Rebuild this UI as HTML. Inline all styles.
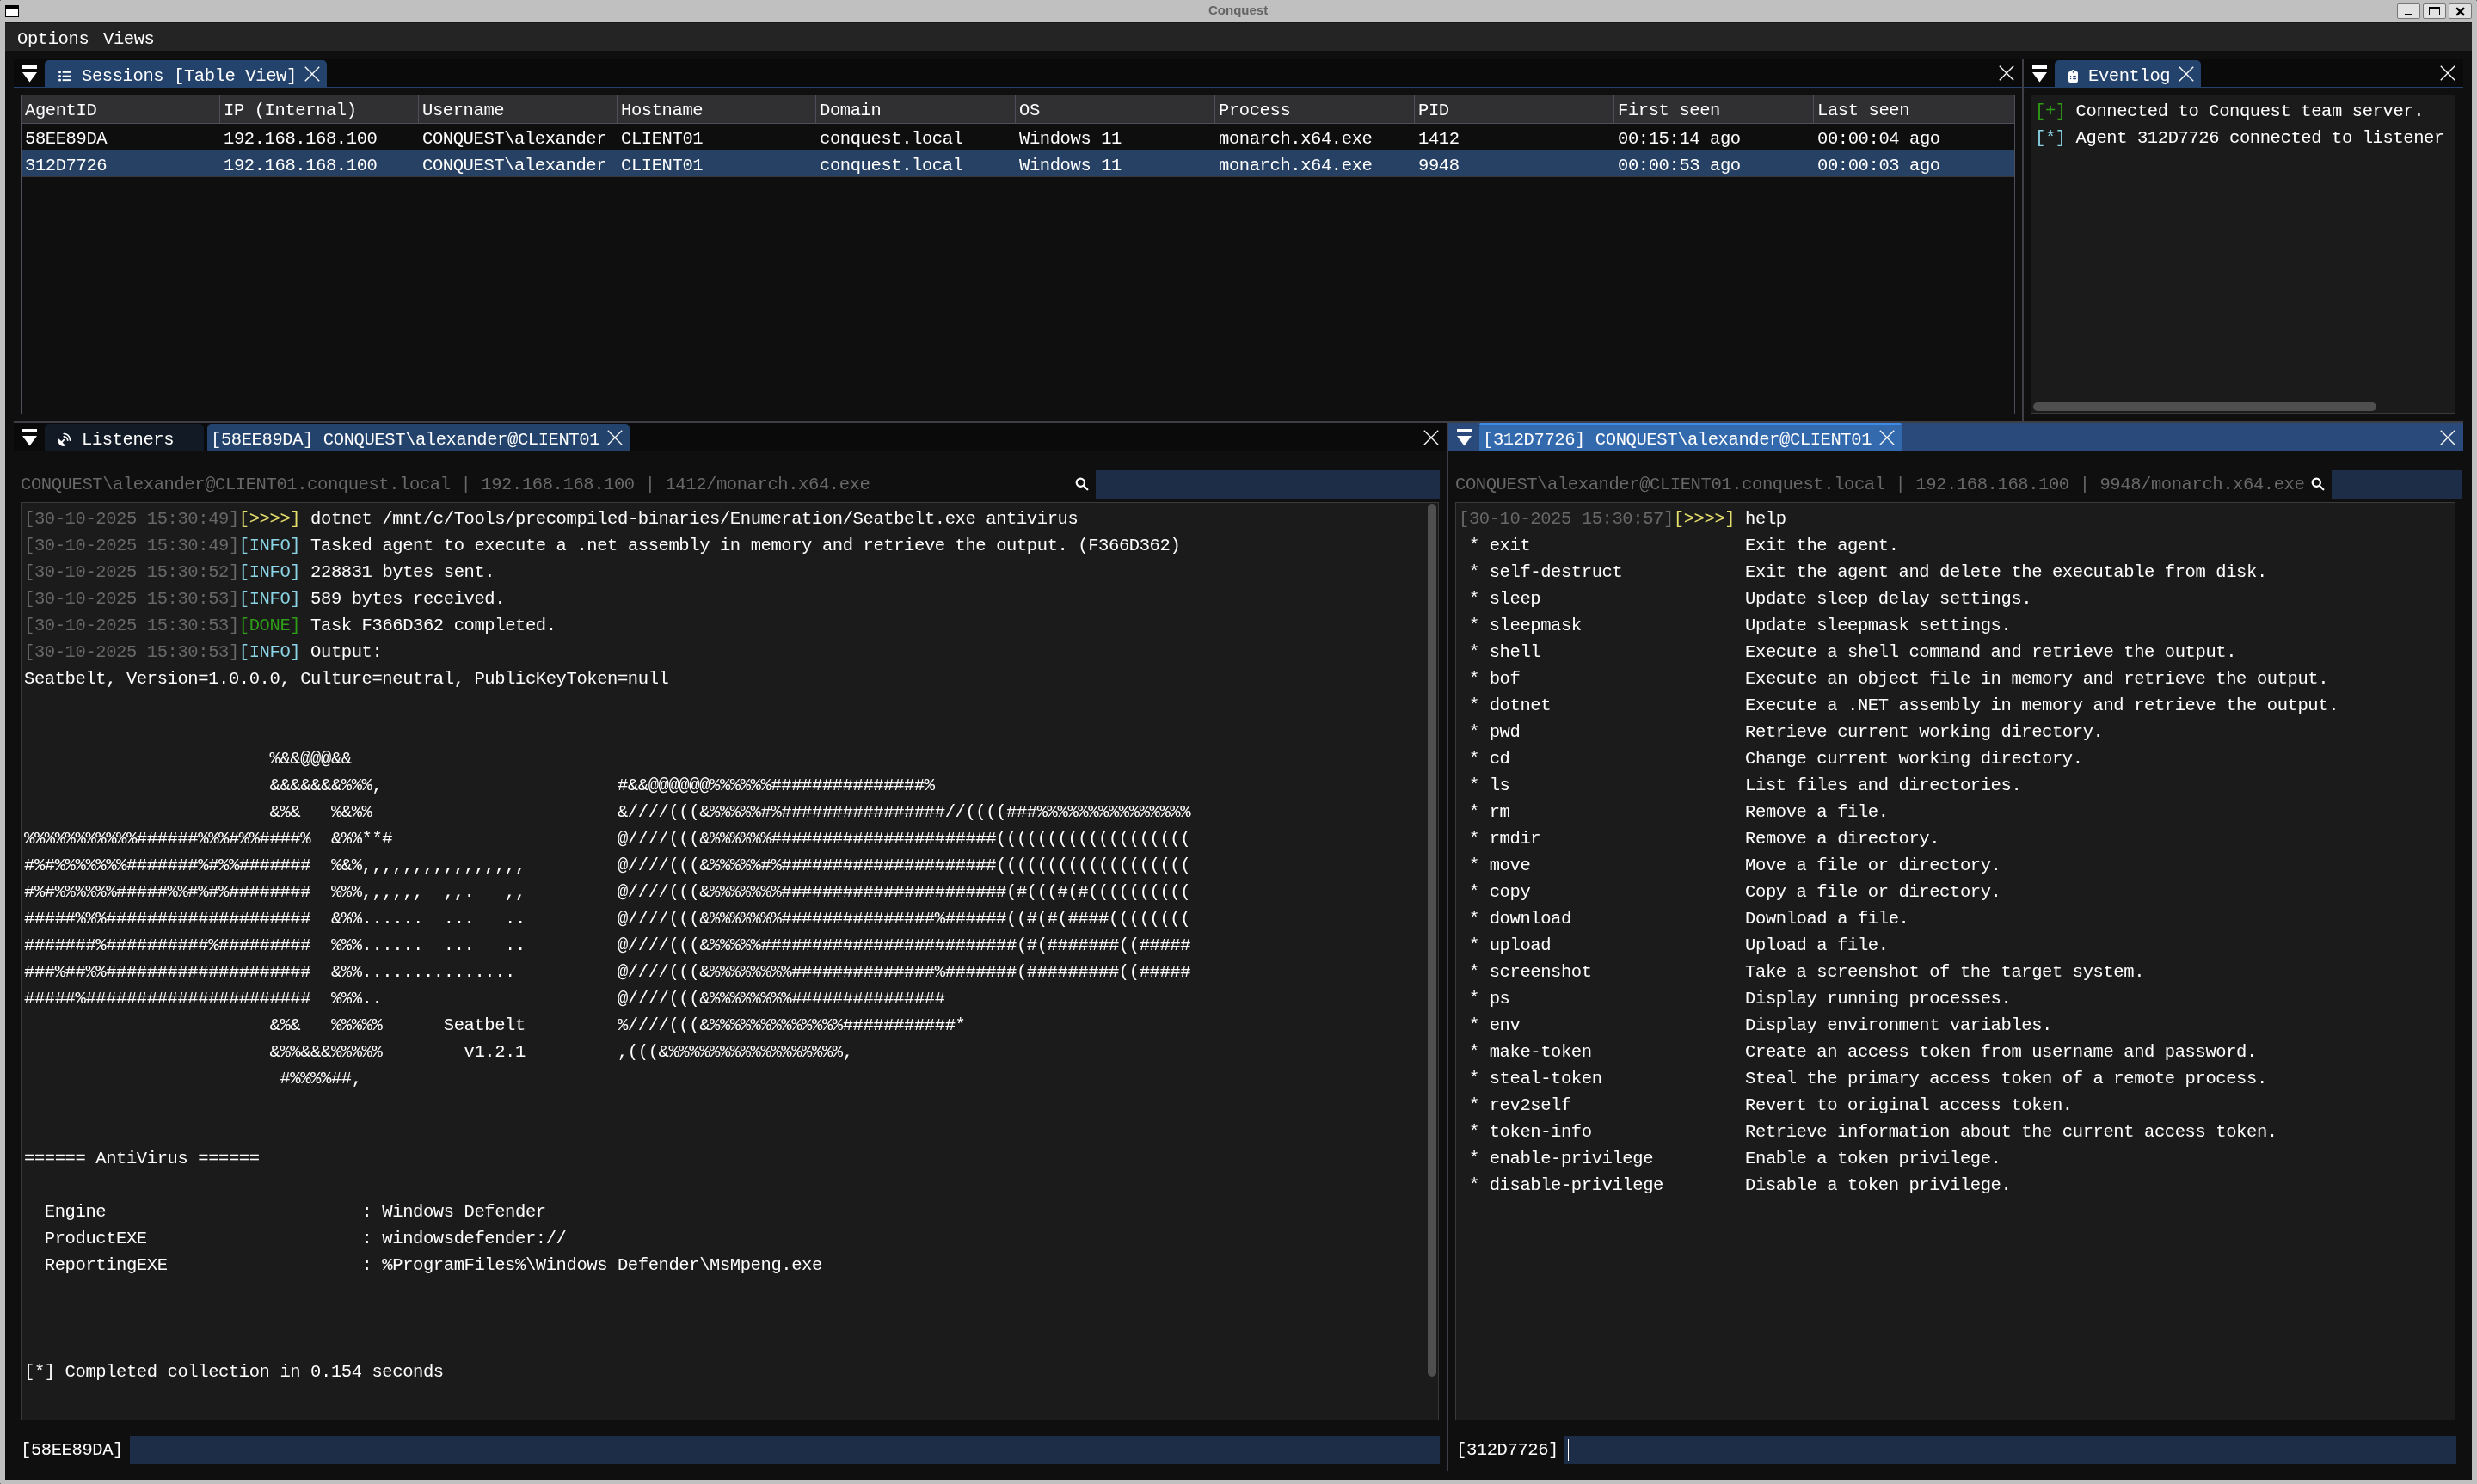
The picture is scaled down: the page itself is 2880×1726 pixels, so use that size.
<!DOCTYPE html><html><head><meta charset="utf-8"><style>
html,body{margin:0;padding:0}
body{width:2880px;height:1726px;background:#c0c0c0;position:relative;overflow:hidden;font-family:"Liberation Mono",monospace}
body div,body svg{position:absolute}
.t{will-change:transform;font-family:"Liberation Mono",monospace;font-size:20.5px;letter-spacing:-0.406px;line-height:31px;white-space:pre}
.g{color:#686868}
.y{color:#e6df6c}
.c{color:#8ad4e6}
.gr{color:#2f9d17}
</style></head><body>

<div style="left:1405px;top:3px;font-family:'Liberation Sans',sans-serif;font-weight:bold;font-size:15px;line-height:18px;color:#646464;white-space:pre;will-change:transform">Conquest</div>
<div style="left:6px;top:6px;width:14px;height:9px;border:1px solid #000;border-top-width:4px;background:#fff"></div>
<div style="left:2787px;top:4px;width:25px;height:16px;background:#e2e2e2;border:1px solid #777;border-radius:2px"></div>
<div style="left:2817px;top:4px;width:25px;height:16px;background:#e2e2e2;border:1px solid #777;border-radius:2px"></div>
<div style="left:2847px;top:4px;width:25px;height:16px;background:#e2e2e2;border:1px solid #777;border-radius:2px"></div>
<div style="left:2796px;top:16px;width:9px;height:2px;background:#000"></div>
<div style="left:2824px;top:8px;width:11px;height:7px;border:1px solid #000;border-top-width:2px"></div>
<svg style="left:2855px;top:8px" width="11" height="11" viewBox="0 0 11 11"><path d="M2 1.8L9.3 9.2M9.3 1.8L2 9.2" stroke="#000" stroke-width="2.4" stroke-linecap="round" fill="none"/></svg>
<div style="left:6px;top:26px;width:2868px;height:1695px;background:#0f0f0f;"></div>
<div style="left:6px;top:26px;width:2868px;height:1px;background:#161616;"></div>
<div style="left:6px;top:27px;width:2868px;height:32px;background:#242424;"></div>
<div class="t" style="left:19.5px;top:30px;color:#fff;">Options</div>
<div class="t" style="left:120px;top:30px;color:#fff;">Views</div>
<div style="left:16px;top:69px;width:2335px;height:32px;background:#0a0a0a;"></div>
<div style="left:16px;top:101px;width:2335px;height:1px;background:#23436c;"></div>
<svg style="left:26px;top:76px" width="17" height="20" viewBox="0 0 17 20"><rect x="0" y="0" width="17" height="4" fill="#fff"/><path d="M0 8H17L8.5 19.5Z" fill="#fff"/></svg>
<div style="left:52px;top:70px;width:328px;height:32px;background:#23436c;border-radius:5px 5px 0 0"></div>
<svg style="left:67px;top:81px" width="17" height="15" viewBox="0 0 17 15"><circle cx="2.5" cy="2.8" r="1.5" fill="#fff"/><circle cx="2.5" cy="7.5" r="1.5" fill="#fff"/><circle cx="2.5" cy="12.1" r="1.5" fill="#fff"/><rect x="5.7" y="1.9" width="10.2" height="1.9" fill="#fff"/><rect x="5.7" y="6.6" width="10.2" height="1.9" fill="#fff"/><rect x="5.7" y="11.2" width="10.2" height="1.9" fill="#fff"/></svg>
<div class="t" style="left:95px;top:73px;color:#fff;">Sessions [Table View]</div>
<svg style="left:354px;top:77px" width="18" height="18" viewBox="0 0 18 18"><path d="M0.8 0.8L17.2 17.2M17.2 0.8L0.8 17.2" stroke="#fff" stroke-width="1.35" fill="none"/></svg>
<svg style="left:2324px;top:76px" width="18" height="18" viewBox="0 0 18 18"><path d="M0.8 0.8L17.2 17.2M17.2 0.8L0.8 17.2" stroke="#fff" stroke-width="1.35" fill="none"/></svg>
<div style="left:24px;top:110px;width:2319px;height:372px;background:#4f4f59;"></div>
<div style="left:25px;top:111px;width:2317px;height:370px;background:#0f0f0f;"></div>
<div style="left:25px;top:111px;width:2317px;height:32px;background:#303033;"></div>
<div style="left:25px;top:143px;width:2317px;height:1px;background:#4f4f59;"></div>
<div style="left:25px;top:144px;width:2317px;height:30px;background:#0e0e0e;"></div>
<div style="left:25px;top:174px;width:2317px;height:31px;background:#264163;"></div>
<div style="left:25px;top:205px;width:2317px;height:1px;background:#36363c;"></div>
<div style="left:255px;top:111px;width:1px;height:32px;background:#4f4f59;"></div>
<div style="left:486px;top:111px;width:1px;height:32px;background:#4f4f59;"></div>
<div style="left:717px;top:111px;width:1px;height:32px;background:#4f4f59;"></div>
<div style="left:948px;top:111px;width:1px;height:32px;background:#4f4f59;"></div>
<div style="left:1180px;top:111px;width:1px;height:32px;background:#4f4f59;"></div>
<div style="left:1412px;top:111px;width:1px;height:32px;background:#4f4f59;"></div>
<div style="left:1644px;top:111px;width:1px;height:32px;background:#4f4f59;"></div>
<div style="left:1876px;top:111px;width:1px;height:32px;background:#4f4f59;"></div>
<div style="left:2108px;top:111px;width:1px;height:32px;background:#4f4f59;"></div>
<div class="t" style="left:29px;top:113px;color:#fff;">AgentID</div>
<div class="t" style="left:29px;top:146px;color:#fff;">58EE89DA</div>
<div class="t" style="left:29px;top:177px;color:#fff;">312D7726</div>
<div class="t" style="left:260px;top:113px;color:#fff;">IP (Internal)</div>
<div class="t" style="left:260px;top:146px;color:#fff;">192.168.168.100</div>
<div class="t" style="left:260px;top:177px;color:#fff;">192.168.168.100</div>
<div class="t" style="left:491px;top:113px;color:#fff;">Username</div>
<div class="t" style="left:491px;top:146px;color:#fff;">CONQUEST\alexander</div>
<div class="t" style="left:491px;top:177px;color:#fff;">CONQUEST\alexander</div>
<div class="t" style="left:722px;top:113px;color:#fff;">Hostname</div>
<div class="t" style="left:722px;top:146px;color:#fff;">CLIENT01</div>
<div class="t" style="left:722px;top:177px;color:#fff;">CLIENT01</div>
<div class="t" style="left:953px;top:113px;color:#fff;">Domain</div>
<div class="t" style="left:953px;top:146px;color:#fff;">conquest.local</div>
<div class="t" style="left:953px;top:177px;color:#fff;">conquest.local</div>
<div class="t" style="left:1185px;top:113px;color:#fff;">OS</div>
<div class="t" style="left:1185px;top:146px;color:#fff;">Windows 11</div>
<div class="t" style="left:1185px;top:177px;color:#fff;">Windows 11</div>
<div class="t" style="left:1417px;top:113px;color:#fff;">Process</div>
<div class="t" style="left:1417px;top:146px;color:#fff;">monarch.x64.exe</div>
<div class="t" style="left:1417px;top:177px;color:#fff;">monarch.x64.exe</div>
<div class="t" style="left:1649px;top:113px;color:#fff;">PID</div>
<div class="t" style="left:1649px;top:146px;color:#fff;">1412</div>
<div class="t" style="left:1649px;top:177px;color:#fff;">9948</div>
<div class="t" style="left:1881px;top:113px;color:#fff;">First seen</div>
<div class="t" style="left:1881px;top:146px;color:#fff;">00:15:14 ago</div>
<div class="t" style="left:1881px;top:177px;color:#fff;">00:00:53 ago</div>
<div class="t" style="left:2113px;top:113px;color:#fff;">Last seen</div>
<div class="t" style="left:2113px;top:146px;color:#fff;">00:00:04 ago</div>
<div class="t" style="left:2113px;top:177px;color:#fff;">00:00:03 ago</div>
<div style="left:2351px;top:69px;width:2px;height:421px;background:#3e3e47;"></div>
<div style="left:2353px;top:69px;width:511px;height:32px;background:#0a0a0a;"></div>
<div style="left:2353px;top:101px;width:511px;height:1px;background:#23436c;"></div>
<svg style="left:2363px;top:76px" width="17" height="20" viewBox="0 0 17 20"><rect x="0" y="0" width="17" height="4" fill="#fff"/><path d="M0 8H17L8.5 19.5Z" fill="#fff"/></svg>
<div style="left:2389px;top:70px;width:170px;height:32px;background:#23436c;border-radius:5px 5px 0 0"></div>
<svg style="left:2404px;top:80px" width="13" height="17" viewBox="0 0 13 17"><path d="M3 3H4.1Q4.4 1 6.5 1Q8.6 1 8.9 3H10Q12 3 12 5V14Q12 16 10 16H3Q1 16 1 14V5Q1 3 3 3Z" fill="#fff"/><circle cx="6.5" cy="3.9" r="0.8" fill="#23436c"/><circle cx="3.6" cy="8.8" r="0.75" fill="#23436c"/><rect x="6.1" y="8.1" width="3.9" height="1.4" rx="0.7" fill="#23436c"/><circle cx="3.6" cy="11.5" r="0.75" fill="#23436c"/><rect x="6.1" y="10.8" width="3.9" height="1.4" rx="0.7" fill="#23436c"/></svg>
<div class="t" style="left:2428px;top:73px;color:#fff;">Eventlog</div>
<svg style="left:2533px;top:77px" width="18" height="18" viewBox="0 0 18 18"><path d="M0.8 0.8L17.2 17.2M17.2 0.8L0.8 17.2" stroke="#fff" stroke-width="1.35" fill="none"/></svg>
<svg style="left:2837px;top:76px" width="18" height="18" viewBox="0 0 18 18"><path d="M0.8 0.8L17.2 17.2M17.2 0.8L0.8 17.2" stroke="#fff" stroke-width="1.35" fill="none"/></svg>
<div style="left:2361px;top:110px;width:494px;height:371px;background:#3a3a3a;"></div>
<div style="left:2362px;top:111px;width:492px;height:369px;background:#1b1b1b;"></div>
<div style="left:2362px;top:111px;width:486px;height:369px;overflow:hidden">
<div class="t" style="left:4px;top:3px;color:#fff"><span class="gr">[+]</span> Connected to Conquest team server.
<span class="c">[*]</span> Agent 312D7726 connected to listener 6B2F</div>
</div>
<div style="left:2364px;top:468px;width:399px;height:10px;background:#4f4f4f;border-radius:5px"></div>
<div style="left:16px;top:490px;width:2848px;height:2px;background:#3e3e47;"></div>
<div style="left:16px;top:492px;width:1666px;height:32px;background:#0a0a0a;"></div>
<div style="left:16px;top:524px;width:1666px;height:1px;background:#23436c;"></div>
<svg style="left:26px;top:499px" width="17" height="20" viewBox="0 0 17 20"><rect x="0" y="0" width="17" height="4" fill="#fff"/><path d="M0 8H17L8.5 19.5Z" fill="#fff"/></svg>
<div style="left:52px;top:493px;width:185px;height:31px;background:#111a25;border-radius:5px 5px 0 0"></div>
<svg style="left:66px;top:502px" width="18" height="18" viewBox="0 0 18 18"><path d="M2.2 8.2L10.3 16.3Q7.5 18 4.5 16Q0.5 13 2.2 8.2Z" fill="#fff"/><path d="M5.5 12.5L8.3 9.7" stroke="#fff" stroke-width="1.8" stroke-linecap="round"/><path d="M8.2 2.5Q14.8 3 15.6 10.2" stroke="#fff" stroke-width="1.7" fill="none" stroke-linecap="round"/><path d="M8.2 5.8Q12.3 6.2 12.7 10.2" stroke="#fff" stroke-width="1.7" fill="none" stroke-linecap="round"/></svg>
<div class="t" style="left:95px;top:496px;color:#fff;">Listeners</div>
<div style="left:241px;top:493px;width:491px;height:32px;background:#23436c;border-radius:5px 5px 0 0"></div>
<div class="t" style="left:245px;top:496px;color:#fff;">[58EE89DA] CONQUEST\alexander@CLIENT01</div>
<svg style="left:706px;top:500px" width="18" height="18" viewBox="0 0 18 18"><path d="M0.8 0.8L17.2 17.2M17.2 0.8L0.8 17.2" stroke="#fff" stroke-width="1.35" fill="none"/></svg>
<svg style="left:1655px;top:500px" width="18" height="18" viewBox="0 0 18 18"><path d="M0.8 0.8L17.2 17.2M17.2 0.8L0.8 17.2" stroke="#fff" stroke-width="1.35" fill="none"/></svg>
<div class="t" style="left:23.5px;top:548px;color:#686868;">CONQUEST\alexander@CLIENT01.conquest.local | 192.168.168.100 | 1412/monarch.x64.exe</div>
<svg style="left:1250px;top:555px" width="16" height="16" viewBox="0 0 16 16"><circle cx="6.3" cy="6.3" r="4.6" stroke="#fff" stroke-width="2.2" fill="none"/><path d="M9.7 9.7L14.3 14.3" stroke="#fff" stroke-width="2.3" stroke-linecap="round"/></svg>
<div style="left:1274px;top:547px;width:400px;height:33px;background:#1e2d47;"></div>
<div style="left:24px;top:584px;width:1649px;height:1068px;background:#3a3a3a;"></div>
<div style="left:25px;top:585px;width:1647px;height:1066px;background:#1b1b1b;"></div>
<div style="left:1660px;top:586px;width:10px;height:1015px;background:#4f4f4f;border-radius:5px"></div>
<div class="t" style="left:27.5px;top:588px;color:#fff"><span class="g">[30-10-2025 15:30:49]</span><span class="y">[&gt;&gt;&gt;&gt;]</span> dotnet /mnt/c/Tools/precompiled-binaries/Enumeration/Seatbelt.exe antivirus
<span class="g">[30-10-2025 15:30:49]</span><span class="c">[INFO]</span> Tasked agent to execute a .net assembly in memory and retrieve the output. (F366D362)
<span class="g">[30-10-2025 15:30:52]</span><span class="c">[INFO]</span> 228831 bytes sent.
<span class="g">[30-10-2025 15:30:53]</span><span class="c">[INFO]</span> 589 bytes received.
<span class="g">[30-10-2025 15:30:53]</span><span class="gr">[DONE]</span> Task F366D362 completed.
<span class="g">[30-10-2025 15:30:53]</span><span class="c">[INFO]</span> Output:
Seatbelt, Version=1.0.0.0, Culture=neutral, PublicKeyToken=null


                        %&amp;&amp;@@@&amp;&amp;
                        &amp;&amp;&amp;&amp;&amp;&amp;&amp;%%%,                       #&amp;&amp;@@@@@@%%%%%%###############%
                        &amp;%&amp;   %&amp;%%                        &amp;////(((&amp;%%%%%#%################//((((###%%%%%%%%%%%%%%%
%%%%%%%%%%%######%%%#%%####%  &amp;%%**#                      @////(((&amp;%%%%%%######################(((((((((((((((((((
#%#%%%%%%%#######%#%%#######  %&amp;%,,,,,,,,,,,,,,,,         @////(((&amp;%%%%%#%#####################(((((((((((((((((((
#%#%%%%%%#####%%#%#%########  %%%,,,,,,  ,,.   ,,         @////(((&amp;%%%%%%%######################(#(((#(#((((((((((
#####%%%####################  &amp;%%......  ...   ..         @////(((&amp;%%%%%%%###############%######((#(#(####((((((((
#######%##########%#########  %%%......  ...   ..         @////(((&amp;%%%%%#########################(#(#######((#####
###%##%%####################  &amp;%%...............          @////(((&amp;%%%%%%%%##############%#######(#########((#####
#####%######################  %%%..                       @////(((&amp;%%%%%%%%###############
                        &amp;%&amp;   %%%%%      Seatbelt         %////(((&amp;%%%%%%%%%%%%%###########*
                        &amp;%%&amp;&amp;&amp;%%%%%        v1.2.1         ,(((&amp;%%%%%%%%%%%%%%%%%,
                         #%%%%##,


====== AntiVirus ======

  Engine                         : Windows Defender
  ProductEXE                     : windowsdefender://
  ReportingEXE                   : %ProgramFiles%\Windows Defender\MsMpeng.exe



[*] Completed collection in 0.154 seconds</div>
<div class="t" style="left:23.5px;top:1671px;color:#fff;">[58EE89DA]</div>
<div style="left:151px;top:1670px;width:1523px;height:33px;background:#1e2d47;"></div>
<div style="left:1682px;top:492px;width:2px;height:1219px;background:#3e3e47;"></div>
<div style="left:1684px;top:492px;width:1180px;height:32px;background:#294a7a;"></div>
<div style="left:1684px;top:524px;width:1180px;height:1px;background:#3369ad;"></div>
<svg style="left:1694px;top:499px" width="17" height="20" viewBox="0 0 17 20"><rect x="0" y="0" width="17" height="4" fill="#fff"/><path d="M0 8H17L8.5 19.5Z" fill="#fff"/></svg>
<div style="left:1720px;top:492px;width:491px;height:33px;background:#3369ad;border-radius:5px 5px 0 0"></div>
<div style="left:1720px;top:492px;width:491px;height:2px;background:#3d8ae8;border-radius:5px 5px 0 0"></div>
<div class="t" style="left:1724px;top:496px;color:#fff;">[312D7726] CONQUEST\alexander@CLIENT01</div>
<svg style="left:2185px;top:500px" width="18" height="18" viewBox="0 0 18 18"><path d="M0.8 0.8L17.2 17.2M17.2 0.8L0.8 17.2" stroke="#fff" stroke-width="1.35" fill="none"/></svg>
<svg style="left:2837px;top:500px" width="18" height="18" viewBox="0 0 18 18"><path d="M0.8 0.8L17.2 17.2M17.2 0.8L0.8 17.2" stroke="#fff" stroke-width="1.35" fill="none"/></svg>
<div class="t" style="left:1692px;top:548px;color:#686868;">CONQUEST\alexander@CLIENT01.conquest.local | 192.168.168.100 | 9948/monarch.x64.exe</div>
<svg style="left:2687px;top:555px" width="16" height="16" viewBox="0 0 16 16"><circle cx="6.3" cy="6.3" r="4.6" stroke="#fff" stroke-width="2.2" fill="none"/><path d="M9.7 9.7L14.3 14.3" stroke="#fff" stroke-width="2.3" stroke-linecap="round"/></svg>
<div style="left:2711px;top:547px;width:152px;height:33px;background:#1e2d47;"></div>
<div style="left:1692px;top:584px;width:1163px;height:1068px;background:#3a3a3a;"></div>
<div style="left:1693px;top:585px;width:1161px;height:1066px;background:#1b1b1b;"></div>
<div class="t" style="left:1696px;top:588px;color:#fff"><span class="g">[30-10-2025 15:30:57]</span><span class="y">[&gt;&gt;&gt;&gt;]</span> help
 * exit                     Exit the agent.
 * self-destruct            Exit the agent and delete the executable from disk.
 * sleep                    Update sleep delay settings.
 * sleepmask                Update sleepmask settings.
 * shell                    Execute a shell command and retrieve the output.
 * bof                      Execute an object file in memory and retrieve the output.
 * dotnet                   Execute a .NET assembly in memory and retrieve the output.
 * pwd                      Retrieve current working directory.
 * cd                       Change current working directory.
 * ls                       List files and directories.
 * rm                       Remove a file.
 * rmdir                    Remove a directory.
 * move                     Move a file or directory.
 * copy                     Copy a file or directory.
 * download                 Download a file.
 * upload                   Upload a file.
 * screenshot               Take a screenshot of the target system.
 * ps                       Display running processes.
 * env                      Display environment variables.
 * make-token               Create an access token from username and password.
 * steal-token              Steal the primary access token of a remote process.
 * rev2self                 Revert to original access token.
 * token-info               Retrieve information about the current access token.
 * enable-privilege         Enable a token privilege.
 * disable-privilege        Disable a token privilege.</div>
<div class="t" style="left:1692.5px;top:1671px;color:#fff;">[312D7726]</div>
<div style="left:1819px;top:1670px;width:1037px;height:33px;background:#1e2d47;"></div>
<div style="left:1823px;top:1674px;width:1px;height:25px;background:#ffffff;"></div>
<div style="left:0;top:0;width:1px;height:1px;background:#6a6a72"></div>
<div style="left:2879px;top:0;width:1px;height:1px;background:#6a6a72"></div>
<div style="left:0;top:1725px;width:1px;height:1px;background:#6a6a72"></div>
</body></html>
